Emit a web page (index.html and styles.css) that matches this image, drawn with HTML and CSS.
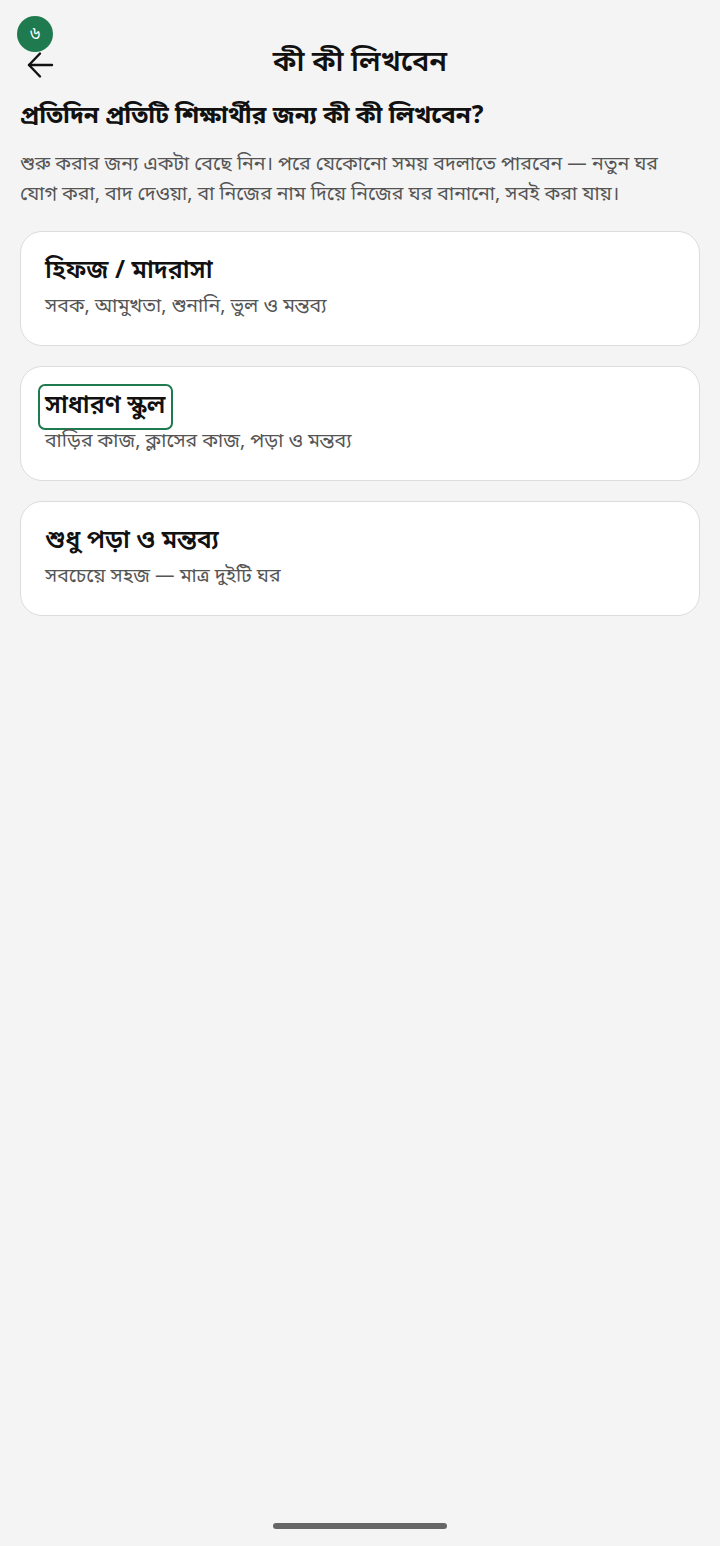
FILE: index.html
```html
<!DOCTYPE html>
<html lang="bn">
<head>
  <meta charset="UTF-8" />
  <meta name="viewport" content="width=device-width, initial-scale=1.0"/>
  <title>কী কী লিখবেন</title>
  <link rel="stylesheet" href="styles.css">
</head>
<body>
  <div class="badge">৬</div>
  <header class="topbar">
    <button class="back" aria-label="ফিরে যান">
      <svg width="28" height="28" viewBox="0 0 28 28" fill="none" stroke="#111" stroke-width="2.4" stroke-linecap="round" stroke-linejoin="round">
        <path d="M26 14H3"/>
        <path d="M14 2.5L3 14l11 11.5"/>
      </svg>
    </button>
    <h1 class="title">কী কী লিখবেন</h1>
  </header>

  <main class="content">
    <h2 class="question">প্রতিদিন প্রতিটি শিক্ষার্থীর জন্য কী কী লিখবেন?</h2>
    <p class="intro">শুরু করার জন্য একটা বেছে নিন। পরে যেকোনো সময় বদলাতে পারবেন — নতুন ঘর যোগ করা, বাদ দেওয়া, বা নিজের নাম দিয়ে নিজের ঘর বানানো, সবই করা যায়।</p>

    <div class="options">
      <div class="card">
        <div class="card-title">হিফজ / মাদরাসা</div>
        <div class="card-sub">সবক, আমুখতা, শুনানি, ভুল ও মন্তব্য</div>
      </div>
      <div class="card">
        <div class="card-title focused">সাধারণ স্কু&zwnj;ল</div>
        <div class="card-sub">বাড়ির কাজ, ক্লাসের কাজ, পড়া ও মন্তব্য</div>
      </div>
      <div class="card">
        <div class="card-title">শুধু পড়া ও মন্তব্য</div>
        <div class="card-sub">সবচেয়ে সহজ — মাত্র দুইটি ঘর</div>
      </div>
    </div>
  </main>

  <div class="home-bar"></div>
</body>
</html>
```

FILE: styles.css
```css
body {
  margin: 0;
  height: 1546px;
  background: #f4f4f4;
  color: #111;
  font-family: "Noto Sans Bengali", "Noto Serif Bengali", "Lohit Bengali", "Noto Sans", sans-serif;
  position: relative;
  overflow: hidden;
}

.badge {
  position: absolute;
  left: 17px;
  top: 16px;
  width: 36px;
  height: 36px;
  border-radius: 50%;
  background: #1f7a50;
  color: #fff;
  font-size: 17px;
  display: flex;
  align-items: center;
  justify-content: center;
}

.topbar {
  display: flex;
  align-items: center;
  justify-content: center;
  height: 58px;
  padding-top: 34px;
  position: relative;
}

.back {
  position: absolute;
  left: 25px;
  top: 51px;
  border: none;
  background: none;
  padding: 0;
  width: 30px;
  height: 30px;
}

.title {
  margin: 0;
  font-size: 29px;
  font-weight: 600;
}

.content {
  padding: 0 20px;
}

.question {
  margin: 9px 0 17px;
  font-size: 24.3px;
  line-height: 32px;
  font-weight: 700;
}

.intro {
  margin: 0 0 21px;
  font-size: 19.5px;
  line-height: 30px;
  color: #555;
}

.options {
  display: flex;
  flex-direction: column;
  gap: 20px;
}

.card {
  box-sizing: border-box;
  height: 115px;
  background: #fff;
  border: 1.5px solid #dcdcdc;
  border-radius: 22px;
  padding: 16.5px 24px 0;
  display: flex;
  flex-direction: column;
}

.card-title {
  font-size: 25px;
  line-height: 40px;
  font-weight: 600;
  align-self: flex-start;
  border: 2px solid transparent;
  border-radius: 7px;
  padding: 1px 5px;
  margin-left: -7px;
}

.card-title.focused {
  border-color: #1f7a50;
}

.card-sub {
  font-size: 19.5px;
  line-height: 20px;
  padding-top: 2px;
  color: #555;
}

.home-bar {
  position: absolute;
  left: 273px;
  bottom: 17px;
  width: 174px;
  height: 6px;
  border-radius: 3px;
  background: #666;
}
```
